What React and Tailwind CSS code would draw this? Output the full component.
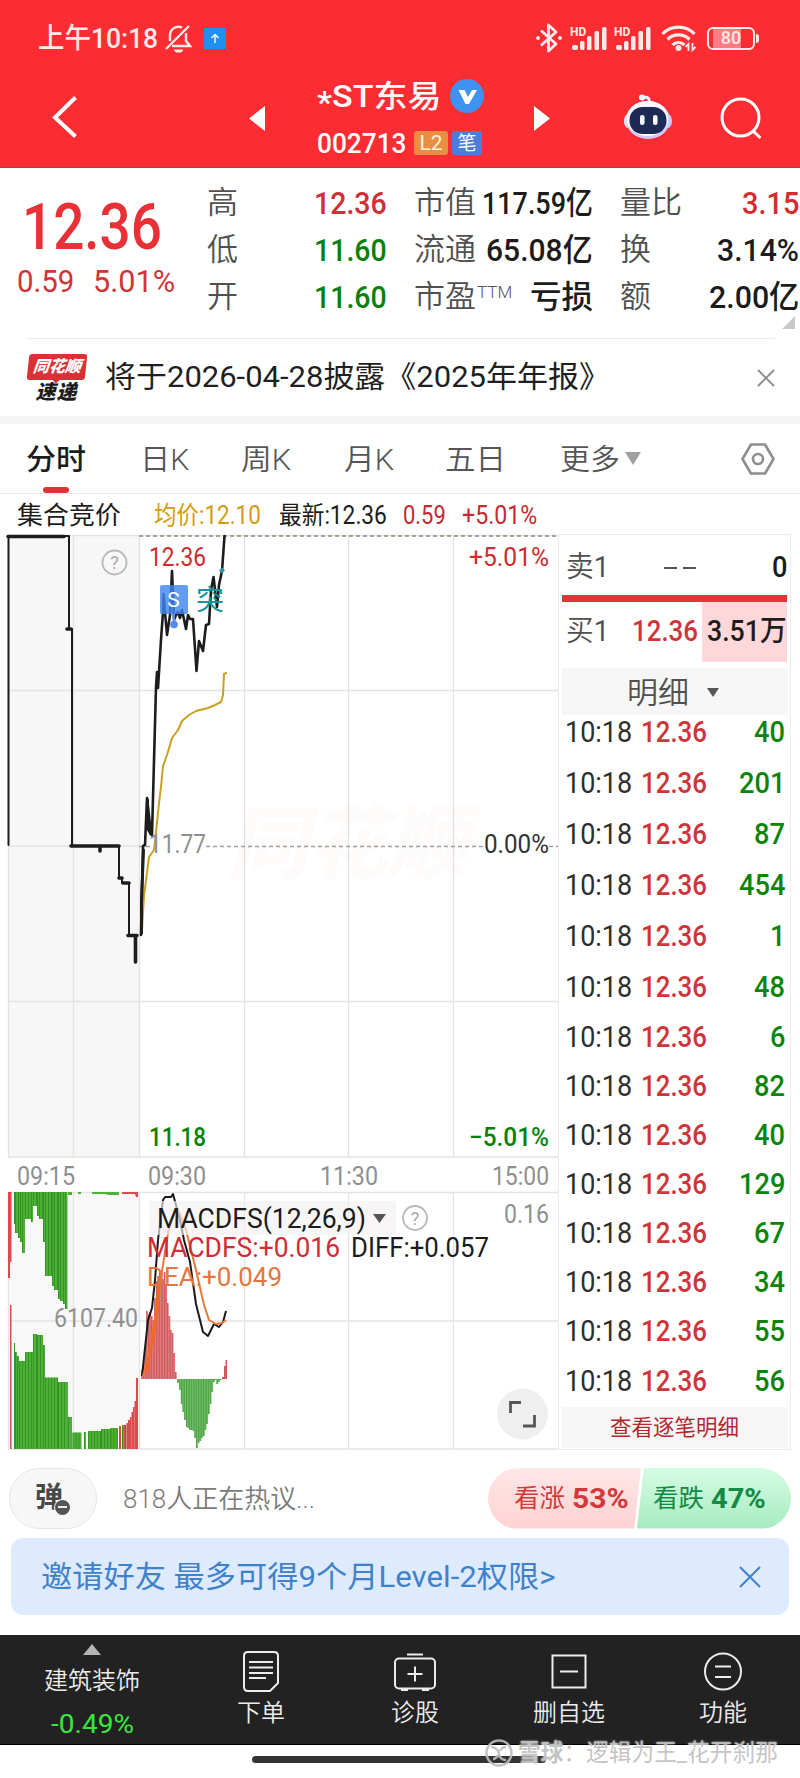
import { useLayoutEffect, useRef, useState } from "react";
import clsx from "clsx";

const STATS = [
  [
    { label: "高", value: "12.36", tone: "text-[#d02f35]", width: "w-[73px]" },
    { label: "市值", value: "117.59亿", tone: "text-[#1c1c1c]", width: "w-[111px]" },
    { label: "量比", value: "3.15", tone: "text-[#d62b31]", width: "w-[57px]" },
  ],
  [
    { label: "低", value: "11.60", tone: "text-[#078207]", width: "w-[73px]" },
    { label: "流通", value: "65.08亿", tone: "text-[#1c1c1c]", width: "w-[107px]" },
    { label: "换", value: "3.14%", tone: "text-[#1c1c1c]", width: "w-[82px]" },
  ],
  [
    { label: "开", value: "11.60", tone: "text-[#078207]", width: "w-[73px]" },
    { label: "市盈", value: "亏损", tone: "text-[#1c1c1c]", width: "w-[63px]", sup: "TTM" },
    { label: "额", value: "2.00亿", tone: "text-[#1c1c1c]", width: "w-[90px]" },
  ],
];

const TRADES = [40, 201, 87, 454, 1, 48, 6, 82, 40, 129, 67, 34, 55, 56];

const QTY_WIDTHS = { 1: "w-[15px]", 2: "w-[31px]", 3: "w-[46px]" };

// [x, y] points, in page pixels
const PRICE = [
  [141, 935], [143, 846], [145, 845], [147, 798], [151, 834], [152, 835], [156, 687], [157, 672],
  [158, 688], [161, 640], [163, 612], [163.5, 594], [165, 612], [167, 635], [170, 615], [172, 571],
  [174, 620], [176, 615], [178, 612], [180, 618], [182, 610], [186, 629], [188, 615], [190, 619],
  [193, 619], [196.5, 671], [199, 641], [203, 651], [206, 625], [209, 624], [211, 590], [213.5, 577],
  [217, 607], [219, 585], [222, 571], [224.5, 536],
];

const AVERAGE = [
  [142, 930], [144, 896], [149, 857], [154, 850], [156, 832], [159, 803], [161, 787], [163, 766],
  [167, 755], [170, 745], [172, 738], [178, 730], [182, 721], [189, 715], [196, 711], [208, 708],
  [215, 705], [221, 702], [223, 695], [224, 674], [226, 673],
];

const DIFF = [
  [142, 1376], [148, 1320], [152, 1308], [155, 1280], [158, 1240], [163, 1200], [165, 1197],
  [171, 1197], [173, 1194], [176, 1205], [180, 1220], [184, 1240], [190, 1262], [196, 1304],
  [203, 1332], [208, 1336], [211, 1330], [214, 1324], [219, 1327], [223, 1322], [226, 1311],
];

const DEA = [
  [143, 1376], [148, 1360], [154, 1325], [160, 1285], [166, 1245], [170, 1222], [176, 1210],
  [180, 1214], [186, 1230], [196, 1270], [204, 1305], [209, 1320], [216, 1324], [222, 1323],
  [226, 1320],
];

// Auction bars: [from x, to x, y]
const UNMATCHED = [
  [14, 15, 1224], [15, 18, 1233], [18, 20, 1238], [20, 22, 1242], [22, 25, 1253], [25, 31, 1219],
  [31, 33, 1222], [33, 37, 1206], [37, 39, 1216], [39, 43, 1219], [43, 45, 1242], [45, 52, 1276],
  [52, 54, 1286], [54, 58, 1290], [58, 60, 1299], [60, 63, 1301], [63, 65, 1304], [65, 67.5, 1309],
];

const MATCHED = [
  [14, 15, 1343], [15, 17, 1352], [17, 19, 1356], [19, 25, 1361], [25, 33, 1352], [33, 37, 1334],
  [37, 43, 1335], [43, 45, 1345], [45, 58, 1377.5], [58, 67.5, 1382], [68, 71.5, 1417],
  [72.5, 81.5, 1432.5], [84, 86, 1432], [88, 101, 1431], [101, 110.5, 1429], [110.5, 118, 1428],
  [122, 126.5, 1425],
];

const MATCHED_RED = [
  [10, 11.5, 1305], [119, 121, 1426], [124, 125, 1425], [126.5, 128, 1423], [128, 130, 1420],
  [130, 131.5, 1417], [131.5, 133, 1412], [133, 134.5, 1407], [134.5, 136, 1401], [136, 138, 1378],
];

const MACD_RED = [
  1370, 1362, 1348, 1311, 1314, 1312, 1316, 1320, 1298, 1281, 1276, 1270, 1274, 1279, 1272, 1284, 1303, 1316,
  1330, 1333, 1353, 1372,
];

const MACD_GREEN = [
  1383, 1390, 1404, 1412, 1420, 1427, 1428, 1430, 1430, 1431, 1438, 1448, 1443, 1441, 1438, 1436,
  1430, 1424, 1414, 1404, 1392, 1382, 1380, 1384, 1382, 1380,
];

const toPoints = (list) => list.map((p) => p.join(",")).join(" ");

// Squeezes a text into the width its class gives, the way the app's narrow digits look
const Fit = ({ className, children }) => {
  const outer = useRef(null);
  const inner = useRef(null);
  const [scale, setScale] = useState(1);

  useLayoutEffect(() => {
    setScale(outer.current.clientWidth / inner.current.offsetWidth);
  }, [children]);

  return (
    <span ref={outer} className={clsx("block shrink-0 leading-none whitespace-nowrap", className)}>
      <span
        ref={inner}
        className="inline-block origin-left align-top"
        style={{ transform: `scaleX(${scale})` }}
      >
        {children}
      </span>
    </span>
  );
};

const Signal = () => (
  <div className="relative h-[25px] w-[38px]">
    <span className="absolute left-0 top-0 text-[12px] font-bold leading-none">HD</span>
    <svg className="absolute inset-0" width="38" height="25" viewBox="0 0 38 25" fill="currentColor">
      <rect x="2" y="19" width="6" height="5" rx="2" />
      <rect x="10" y="15" width="4.5" height="9" rx="1.5" />
      <rect x="17" y="10" width="4.5" height="14" rx="1.5" />
      <rect x="24.5" y="5" width="4.5" height="19" rx="1.5" />
      <rect x="32" y="1" width="4.5" height="23" rx="1.5" />
    </svg>
  </div>
);

const StatusBar = () => (
  <div className="flex h-[76px] items-center pl-[38px] pr-[41px] text-[#ffe9e9]">
    <Fit className="mt-[1px] w-[120px] text-[28px] font-medium">上午10:18</Fit>
    <svg className="ml-[7px]" width="27" height="29" viewBox="0 0 27 29" fill="none" stroke="currentColor" strokeWidth="2.4">
      <path d="M5 17V11a8.500 8.500 0 0 1 12-7.500M21 9v8l4 5H7M1 25 24 2" />
      <path d="M9 26h9l-2 2h-5z" fill="currentColor" strokeWidth="1" />
    </svg>
    <svg className="ml-3" width="22" height="21" viewBox="0 0 22 21" fill="none">
      <rect width="22" height="21" fill="#1f8ff0" />
      <path d="M11 15V7M7.500 10 11 6.500 14.500 10" stroke="#fff" strokeWidth="1.400" />
    </svg>
    <div className="ml-auto flex items-center">
      <svg width="28" height="30" viewBox="0 0 28 30" fill="none" stroke="currentColor" strokeWidth="2.800">
        <path d="M6 7.500 21 21l-7.500 7V2L21 9 6 22.500" strokeLinejoin="round" />
        <circle cx="3" cy="15" r="1.500" fill="currentColor" strokeWidth="1" />
        <circle cx="25" cy="15" r="1.500" fill="currentColor" strokeWidth="1" />
      </svg>
      <div className="ml-[7px] flex gap-[6px]">
        <Signal />
        <Signal />
      </div>
      <svg className="ml-[9px]" width="36" height="27" viewBox="0 0 36 27" fill="none" stroke="currentColor" strokeWidth="3.200">
        <path d="M1.500 9a22 22 0 0 1 32 0M6.500 14.500a15.500 15.500 0 0 1 22 0M11.500 20a8.500 8.500 0 0 1 12 0" />
        <circle cx="17.500" cy="23" r="3" fill="currentColor" stroke="none" />
        <path d="M27.500 26v-7l-3 3M31.500 18v7l3-3" strokeWidth="1.800" />
      </svg>
      <div className="ml-[10px] flex items-center">
        <div className="flex h-[23px] w-[48px] items-center justify-center rounded-md border-2 border-current bg-[linear-gradient(90deg,transparent_8%,#ff7d80_8%,#ff7d80_72%,transparent_72%)] text-[18px] font-medium leading-none">
          80
        </div>
        <span className="ml-px h-[9px] w-[3px] rounded-r bg-current" />
      </div>
    </div>
  </div>
);

const Robot = () => (
  <svg width="50" height="46" viewBox="0 0 50 46" fill="none">
    <path d="M19 4c6-2 8 0 7 6" stroke="#f6eaff" strokeWidth="3" />
    <circle cx="19" cy="3.500" r="3" fill="#fff" />
    <ellipse cx="5" cy="27" rx="4" ry="7" fill="#ece8ff" />
    <ellipse cx="45" cy="27" rx="4" ry="7" fill="#c9c5fa" />
    <ellipse cx="25" cy="26" rx="22" ry="19" fill="#cfcbff" />
    <ellipse cx="24.500" cy="24.500" rx="21" ry="17.500" fill="#fbf8ff" />
    <rect x="6.500" y="13" width="37" height="27" rx="13" fill="#1c2a55" />
    <rect x="17" y="21" width="4.500" height="10" rx="2.200" fill="#fff" />
    <rect x="30" y="21" width="4.500" height="10" rx="2.200" fill="#fff" />
  </svg>
);

const Header = () => (
  <div className="flex h-[90px] items-start pl-[51px] text-white">
    <svg className="mt-5 shrink-0" width="27" height="43" viewBox="0 0 27 43" fill="none" stroke="currentColor" strokeWidth="4">
      <path d="M24.500 1.500 4 21.500l20.500 19" />
    </svg>
    <svg className="ml-[170px] mt-[30px] shrink-0" width="17" height="25" viewBox="0 0 17 25" fill="currentColor">
      <path d="M17 0v25L1 12.500z" />
    </svg>
    <div className="ml-[52px] w-[170px] shrink-0">
      <div className="flex h-[40px] items-center">
        <Fit className="w-[124px] text-[31px] font-medium">
          <span className="inline-block translate-y-[6px]">*</span>ST东易
        </Fit>
        <svg className="ml-[9px]" width="34" height="34" viewBox="0 0 34 34">
          <circle cx="17" cy="17" r="17" fill="#3f92f0" />
          <path d="M8.500 11h6l3.500 7 4-7h5l-8 14h-3.500z" fill="#fff" />
        </svg>
      </div>
      <div className="mt-[15px] flex h-6 items-center">
        <Fit className="mt-[2px] w-[89px] text-[28px] font-medium">002713</Fit>
        <span className="ml-[8px] flex h-6 w-[34px] items-center justify-center rounded-[3px] bg-[#e88f43] text-[21px] leading-none text-[#fff2d8]">
          L2
        </span>
        <span className="ml-1 flex h-6 w-[30px] items-center justify-center rounded-[3px] bg-[#4d7ddb] text-[19px] leading-none">
          笔
        </span>
      </div>
    </div>
    <svg className="ml-[47px] mt-[30px] shrink-0" width="17" height="25" viewBox="0 0 17 25" fill="currentColor">
      <path d="M0 0v25l16-12.500z" />
    </svg>
    <div className="ml-[72px] mt-[18px] shrink-0">
      <Robot />
    </div>
    <svg className="ml-[47px] mt-[21px] shrink-0" width="43" height="43" viewBox="0 0 43 43" fill="none" stroke="currentColor" strokeWidth="3">
      <circle cx="20.500" cy="20.500" r="18.500" />
      <path d="m33 34 7.500 7" />
    </svg>
  </div>
);

const COLUMN_WIDTHS = ["w-[180px]", "w-[179px]", "w-[179px]"];

const Quote = () => (
  <section className="relative flex h-[170px]">
    <div className="w-[207px] shrink-0">
      <Fit className="ml-[22px] mt-[27px] w-[140px] text-[65px] font-medium text-[#e83136]">12.36</Fit>
      <div className="mt-[6px] flex gap-[19px] pl-[17px] text-[31px] text-[#cf3439]">
        <Fit className="w-[57px]">0.59</Fit>
        <Fit className="w-[82px]">5.01%</Fit>
      </div>
    </div>
    <div className="mt-[11px] flex flex-col">
      {STATS.map((row) => (
        <div key={row[0].label} className="flex h-[47px] items-center gap-[27px]">
          {row.map((cell, i) => (
            <div key={cell.label} className={clsx("flex items-center", COLUMN_WIDTHS[i])}>
              <span className="text-[31px] font-[350] leading-none text-[#505050]">{cell.label}</span>
              {cell.sup && (
                <Fit className="-mt-2 ml-[1px] w-[35px] text-[17px] font-[350] text-[#555]">{cell.sup}</Fit>
              )}
              <Fit className={clsx("ml-auto text-[32px] font-medium", cell.width, cell.tone)}>
                {cell.value}
              </Fit>
            </div>
          ))}
        </div>
      ))}
    </div>
    <svg className="absolute bottom-[9px] right-[5px]" width="13" height="13" viewBox="0 0 13 13">
      <path d="M13 0v13H0z" fill="#c9c9c9" />
    </svg>
  </section>
);

const Notice = () => (
  <section className="ml-[26px] mr-[25px] flex h-[78px] items-center border-t border-[#ececec]">
    <div className="flex w-[61px] flex-col items-center italic">
      <div className="relative flex h-[26px] w-[58px] -skew-x-6 items-center justify-center rounded-[3px] bg-[#dc3037] text-[16px] font-black leading-none text-white">
        同花顺
        <span className="absolute -bottom-[2px] size-[7px] rotate-45 bg-[#dc3037]" />
      </div>
      <span className="mt-[2px] text-[20px] font-black leading-none tracking-[1px] text-[#1c1c1c]">速递</span>
    </div>
    <Fit className="-mt-[2px] ml-[18px] w-[505px] text-[30px] text-[#1f1f1f]">将于2026-04-28披露《2025年年报》</Fit>
    <svg className="ml-auto" width="18" height="18" viewBox="0 0 18 18" stroke="#8a8a8a" strokeWidth="1.800">
      <path d="m1 1 16 16M17 1 1 17" />
    </svg>
  </section>
);

const Tabs = () => (
  <nav className="flex h-[70px] items-center border-b border-[#ececec] pl-[26px] text-[29px] font-[350] text-[#555]">
    <div className="relative flex h-full items-center font-medium text-[#1c1c1c]">
      <Fit className="mt-[3px] w-[60px]">分时</Fit>
      <span className="absolute bottom-0 left-[17px] h-[6px] w-[26px] rounded-full bg-[#e23336]" />
    </div>
    <Fit className="ml-[54px] mt-[3px] w-[49px]">日K</Fit>
    <Fit className="ml-[52px] mt-[3px] w-[50px]">周K</Fit>
    <Fit className="ml-[53px] mt-[3px] w-[50px]">月K</Fit>
    <Fit className="ml-[51px] mt-[3px] w-[61px]">五日</Fit>
    <Fit className="ml-[54px] mt-[3px] w-[60px]">更多</Fit>
    <svg className="ml-[5px]" width="16" height="13" viewBox="0 0 16 13">
      <path d="M0 0h16L8 13z" fill="#a0a0a0" />
    </svg>
    <svg className="ml-[100px]" width="34" height="32" viewBox="0 0 34 32" fill="none" stroke="#8e8e8e" strokeWidth="2.600">
      <path d="M10 1.500h14L32.500 16 24 30.500H10L1.500 16z" strokeLinejoin="round" />
      <circle cx="17" cy="16" r="5" />
    </svg>
  </nav>
);

const Legend = () => (
  <div className="flex h-[41px] items-center pl-[17px] pt-[2px] text-[25px] text-[#1c1c1c]">
    <Fit className="w-[104px]">集合竞价</Fit>
    <Fit className="ml-[33px] w-[107px] text-[#d59b13]">均价:12.10</Fit>
    <Fit className="ml-[18px] w-[108px]">最新:12.36</Fit>
    <Fit className="ml-[16px] w-[43px] text-[#c8282e]">0.59</Fit>
    <Fit className="ml-[16px] w-[75px] text-[#c8282e]">+5.01%</Fit>
  </div>
);

const Label = ({ x, y, w, size = 26, children, ...rest }) => (
  <text x={x} y={y} fontSize={size} textLength={w} lengthAdjust="spacingAndGlyphs" {...rest}>
    {children}
  </text>
);

const Help = ({ x, y }) => (
  <g>
    <circle cx={x} cy={y} r="12" fill="none" stroke="#b8b8b8" strokeWidth="1.800" />
    <text x={x} y={y + 6.5} fontSize="18" textAnchor="middle" fill="#a8a8a8">
      ?
    </text>
  </g>
);

const Chart = () => (
  <svg className="shrink-0" width="558" height="916" viewBox="0 534 558 916">
    <rect x="8" y="535" width="131" height="622" fill="#f7f7f7" />
    <rect x="8" y="1192" width="131" height="257" fill="#f8f8f8" />
    <g stroke="#e3e3e3" strokeWidth="1.300">
      <path d="M8 535.500H558M8 690.500H558M8 1001.500H558M8 1157H558M8 1192.500H558M8 1321H558M8 1449H558" />
      <path d="M8.500 535V1157M73.500 535V1157M139.500 535V1157M244.500 535V1157M348.500 535V1157M453.500 535V1157" />
      <path d="M8.500 1192V1449M73.500 1192V1449M139.500 1192V1449M244.500 1192V1449M348.500 1192V1449M453.500 1192V1449" />
      <path d="M8 846H139" />
    </g>
    <path d="M139 536H558" stroke="#918c70" strokeWidth="1.400" strokeDasharray="4 3" />
    <path d="M206 846.500H484" stroke="#a0a0a0" strokeWidth="1.400" strokeDasharray="4 3" />
    <path d="M139 846.500H150M549 846.500H558" stroke="#a0a0a0" strokeWidth="1.400" strokeDasharray="4 3" />
    <text x="228" y="872" fontSize="80" fontWeight="900" fontStyle="italic" fill="#e00" opacity="0.012">
      同花顺
    </text>

    <g fill="none" stroke="#1d1d1d" strokeLinejoin="round" strokeLinecap="round">
      <path d="M8.500 845V536H69V629H72V846H119V878H122V883H129V935H135.500V962" strokeWidth="2" />
      <path d="M8 536.500H64M67 629H71M71 846H119M119 878H122M123 883H129M128 935.500H137M135.500 936V962M100 846V851" strokeWidth="3.600" />
      <polyline points={toPoints(AVERAGE)} stroke="#c9a01f" strokeWidth="2" />
      <polyline points={toPoints(PRICE)} strokeWidth="2.600" />
      <path d="M141.500 933V900L143.500 850M147.500 800V828L151 834M157.500 674V686" strokeWidth="3" />
    </g>
    <Label x="149" y="853" w="57" fill="#8f8f8f">11.77</Label>
    <path d="M222 567.500l3 3-3 3-3-3z" fill="#2596a8" />
    <rect x="160" y="585" width="28" height="29" rx="2" fill="#3f87ee" opacity="0.82" />
    <path d="M174 614v8" stroke="#4f90ee" strokeWidth="2" />
    <circle cx="174" cy="624.500" r="3.800" fill="#4f90ee" />
    <text x="173.500" y="607" fontSize="21" textAnchor="middle" fill="#fff">
      S
    </text>
    <text x="196" y="610" fontSize="28" fill="#17939e">
      突
    </text>
    <Help x={114.5} y={562.5} />
    <Label x="149" y="566" w="57" fill="#cf2a30">12.36</Label>
    <Label x="469" y="566" w="80" fill="#cf2a30">+5.01%</Label>
    <Label x="484" y="853" w="65" fill="#333">0.00%</Label>
    <g fill="#078207" fontWeight="500">
      <Label x="149" y="1146" w="57">11.18</Label>
      <Label x="469" y="1146" w="80">−5.01%</Label>
    </g>
    <g fill="#8f8f8f">
      <Label x="17" y="1185" w="58" size={26}>09:15</Label>
      <Label x="148" y="1185" w="58" size={26}>09:30</Label>
      <Label x="320" y="1185" w="58" size={26}>11:30</Label>
      <Label x="492" y="1185" w="57" size={26}>15:00</Label>
      <Label x="504" y="1223" w="45" size={26}>0.16</Label>
    </g>

    <g fill="#4bb236">
      {UNMATCHED.map(([x1, x2, y]) => (
        <rect key={x1} x={x1} y="1192" width={x2 - x1} height={y - 1192} />
      ))}
      {MATCHED.map(([x1, x2, y]) => (
        <rect key={x1} x={x1} y={y} width={x2 - x1} height={1449 - y} />
      ))}
      <path d="M68 1192h4v3h-4zM78 1192h3v2h-3zM92 1192h27v3h-10l-4-1h-13z" />
    </g>
    <g fill="#e0484e">
      {MATCHED_RED.map(([x1, x2, y]) => (
        <rect key={x1} x={x1} y={y} width={x2 - x1} height={1449 - y} />
      ))}
      <rect x="8" y="1192" width="2" height="86" />
      <rect x="10" y="1192" width="1.500" height="70" />
      <path d="M122 1192h16v5h-2l-1-3h-13z" />
    </g>
    <g stroke="#277f1c" strokeWidth="0.600">
      {UNMATCHED.flatMap(([x1, x2, y]) =>
        [x1, x1 + 3, x1 + 6]
          .filter((x) => x < x2)
          .map((x) => <path key={`${x}-${y}`} d={`M${x + 0.5} 1192V${y}`} />)
      )}
      {MATCHED.flatMap(([x1, x2, y]) =>
        [x1, x1 + 3, x1 + 6, x1 + 9, x1 + 12]
          .filter((x) => x < x2)
          .map((x) => <path key={`${x}-${y}`} d={`M${x + 0.5} ${y}V1449`} />)
      )}
    </g>
    <Label x="54" y="1327" w="84" size={26} fill="#909090">6107.40</Label>

    {MACD_RED.map((y, i) => (
      <g key={i}>
        <rect x={141.5 + i * 1.6} y={y} width="1.600" height={1379 - y} fill="#ea7377" />
        <rect x={141.5 + i * 1.6} y={y} width="0.600" height={1379 - y} fill="#b94b50" />
      </g>
    ))}
    {MACD_GREEN.map((y, i) => (
      <g key={i}>
        <rect x={177.5 + i * 1.7} y="1379" width="1.700" height={y - 1379} fill="#68bf5e" />
        <rect x={177.5 + i * 1.7} y="1379" width="0.600" height={y - 1379} fill="#3d8d37" />
      </g>
    ))}
    <path d="M222 1379v-2h2v-11h1.500v-6h1.500v19z" fill="#d9575c" />
    <g fill="none" strokeWidth="2" strokeLinejoin="round">
      <polyline points={toPoints(DIFF)} stroke="#1a1a1a" />
      <polyline points={toPoints(DEA)} stroke="#e9793c" />
      <path d="M146 1372l9-46 4-35M157 1306l3-30" stroke="#f26a22" strokeWidth="3" />
    </g>
    <rect x="149" y="1201" width="247" height="34" fill="#f4eff1" opacity="0.65" />
    <Label x="157" y="1228" w="209" size={27} fill="#1c1c1c">MACDFS(12,26,9)</Label>
    <path d="M373 1214h13l-6.500 9z" fill="#555" />
    <Help x={415} y={1218} />
    <Label x="147" y="1256.500" w="193" size={27} fill="#d02c33">MACDFS:+0.016</Label>
    <Label x="351" y="1256.500" w="138" size={27} fill="#1c1c1c">DIFF:+0.057</Label>
    <Label x="147" y="1285.500" w="135" size={26} fill="#e4763f">DEA:+0.049</Label>
    <circle cx="522.500" cy="1414" r="25.500" fill="#efefef" />
    <path d="M521 1402.500H510.500V1413M523 1426H534.500V1415" fill="none" stroke="#555" strokeWidth="2.800" />
  </svg>
);

const OrderBook = () => (
  <aside className="flex h-[916px] w-[233px] flex-col border border-[#ededed] px-[3px] text-[29px] text-[#505050]">
    <div className="flex h-[60px] items-center pl-[4px] pt-[6px]">
      <Fit className="w-[43px]">
        <span className="font-[350]">卖</span>1
      </Fit>
      <span className="ml-[55px] h-[2px] w-[13px] bg-[#555]" />
      <span className="ml-[6px] h-[2px] w-[13px] bg-[#555]" />
      <Fit className="ml-auto w-[15px] font-medium text-[#1c1c1c]">0</Fit>
    </div>
    <div className="mt-[1px] h-[7px] bg-[#e63337]" />
    <div className="flex h-[60px] items-center pl-[4px]">
      <Fit className="w-[43px]">
        <span className="font-[350]">买</span>1
      </Fit>
      <Fit className="ml-[23px] w-[66px] font-medium text-[#cf3439]">12.36</Fit>
      <div className="ml-auto flex h-full w-[85px] items-center justify-end bg-[#fdd7d9]">
        <Fit className="w-[80px] font-medium text-[#1c1c1c]">3.51万</Fit>
      </div>
    </div>
    <div className="mt-[6px] flex h-[47px] shrink-0 items-center bg-[#f6f6f6] pl-[65px] pt-[3px]">
      <Fit className="w-[62px] text-[30px] font-[350]">明细</Fit>
      <svg className="ml-[18px]" width="12" height="9" viewBox="0 0 12 9">
        <path d="M0 0h12L6 9z" fill="#555" />
      </svg>
    </div>
    <div className="-mt-2 flex flex-col">
      {TRADES.map((qty, i) => (
        <div
          key={i}
          className={clsx("flex items-center pl-[3px] pr-[2px]", i < 6 || i === 13 ? "h-[51px]" : "h-[49px]")}
        >
          <Fit className="w-[67px] font-normal text-[#2e2e2e]">10:18</Fit>
          <Fit className="ml-[9px] w-[66px] font-medium text-[#cf3439]">12.36</Fit>
          <Fit className={clsx("ml-auto font-medium text-[#0a850a]", QTY_WIDTHS[String(qty).length])}>{qty}</Fit>
        </div>
      ))}
    </div>
    <div className="mt-auto mb-[1px] flex h-[42px] items-center justify-center bg-[#f6f6f6] text-[21.500px] leading-none text-[#b3282e]">
      查看逐笔明细
    </div>
  </aside>
);

const Sentiment = () => (
  <section className="flex h-[88px] items-center pb-[1px] pl-[9px] pr-[9px] pt-[9px]">
    <div className="relative flex h-[61px] w-[88px] items-center rounded-full border border-[#e6e6e6] bg-[#f7f7f7] pl-[25px] text-[28px] font-bold leading-none text-[#484848]">
      弹
      <span className="absolute left-[45px] top-[31px] flex size-[15px] items-center justify-center rounded-full bg-[#555] ring-1 ring-[#f7f7f7]">
        <span className="h-[2px] w-[9px] bg-[#eee]" />
      </span>
    </div>
    <Fit className="ml-[26px] mt-[2px] w-[192px] text-[26px] font-[350] text-[#7c7c7c]">818人正在热议...</Fit>
    <div className="ml-auto flex h-[61px] w-[303px] text-[25px]">
      <div className="flex w-[153px] items-center rounded-l-full bg-linear-to-b from-[#ffe6e7] to-[#ffd3d1] pl-[26px] text-[#d13a3a] [clip-path:polygon(0_0,100%_0,95.5%_100%,0_100%)]">
        <Fit className="mt-[1px] w-[51px]">看涨</Fit>
        <Fit className="ml-[7px] mt-[2px] w-[57px] text-[28px] font-bold">53%</Fit>
      </div>
      <div className="-ml-[4px] flex w-[154px] items-center rounded-r-full bg-linear-to-b from-[#d5fce4] to-[#a5ecc0] pl-[16px] text-[#138a45] [clip-path:polygon(4.500%_0,100%_0,100%_100%,0_100%)]">
        <Fit className="mt-[1px] w-[51px]">看跌</Fit>
        <Fit className="ml-[7px] mt-[2px] w-[55px] text-[28px] font-bold">47%</Fit>
      </div>
    </div>
  </section>
);

const Banner = () => (
  <section className="mx-[11px] flex h-[77px] items-center rounded-xl bg-[#deeafd] pl-[30px] pr-[28px] text-[#3f82cc]">
    <Fit className="mt-[1px] w-[515px] text-[30px]">邀请好友 最多可得9个月Level-2权限&gt;</Fit>
    <svg className="ml-auto" width="22" height="22" viewBox="0 0 22 22" stroke="currentColor" strokeWidth="2">
      <path d="m1 1 20 20M21 1 1 21" />
    </svg>
  </section>
);

const NAV = [
  {
    label: "下单",
    icon: (
      <>
        <path d="M6 1h26q4 0 4 4v27l-8 8H6q-4 0-4-4V5q0-4 4-4z" />
        <path d="M7 11h24M7 16.500h24M7 22h24M7 27h17" />
      </>
    ),
  },
  {
    label: "诊股",
    icon: (
      <>
        <rect x="-1" y="7.500" width="40" height="30" rx="4" />
        <path d="M11 3.500h16M19 15.500v15M11.500 23h15M5 39h7M26 39h7" />
      </>
    ),
  },
  {
    label: "删自选",
    icon: (
      <>
        <rect x="2.500" y="4.500" width="33" height="32" />
        <path d="M10 20.500h18" />
      </>
    ),
  },
  {
    label: "功能",
    icon: (
      <>
        <circle cx="19" cy="20.500" r="18" />
        <path d="M11 15.500h16M11 26h16" />
      </>
    ),
  },
];

const BottomBar = () => (
  <nav className="mt-5 flex h-[110px] border-b border-black bg-[#222] text-[24px] font-[350] leading-none text-[#ececec]">
    <div className="flex w-[184px] flex-col items-center pt-[9px]">
      <svg width="18" height="11" viewBox="0 0 18 11">
        <path d="M9 0l9 11H0z" fill="#b5b5b5" />
      </svg>
      <span className="mt-[14px]">建筑装饰</span>
      <Fit className="mt-[18px] w-[83px] text-[26px] font-normal text-[#38e83c]">-0.49%</Fit>
    </div>
    {NAV.map((item) => (
      <div key={item.label} className="flex w-[154px] flex-col items-center pt-4">
        <svg
          className="overflow-visible"
          width="38"
          height="41"
          viewBox="0 0 38 41"
          fill="none"
          stroke="currentColor"
          strokeWidth="2"
        >
          {item.icon}
        </svg>
        <span className="mt-[9px]">{item.label}</span>
      </div>
    ))}
  </nav>
);

export default function App() {
  return (
    <main className="relative h-[1778px] w-[800px] overflow-hidden bg-white font-['Roboto','Noto_Sans_CJK_SC',sans-serif]">
      <header className="h-[168px] border-b border-[#c8353a] bg-[#fb2d33]">
        <StatusBar />
        <Header />
      </header>
      <Quote />
      <Notice />
      <div className="h-2 bg-[#f5f5f5]" />
      <Tabs />
      <Legend />
      <div className="-mt-[1px] flex">
        <Chart />
        <OrderBook />
      </div>
      <Sentiment />
      <Banner />
      <BottomBar />
      <div className="ml-[252px] mt-[11px] h-[7px] w-[294px] rounded-full bg-[#333]" />
      <div className="absolute bottom-[11px] left-[485px] flex items-center text-[24px] leading-none text-[#bdbdbd]/90 [text-shadow:0_0_2px_#fff]">
        <svg width="28" height="28" viewBox="0 0 28 28" fill="none" stroke="currentColor" strokeWidth="2.500">
          <circle cx="14" cy="14" r="12.500" />
          <path d="M6 8c5 0 8 4 8 7s3 6 7 6M21 8c-3 0-5 2-6 4M8 20c3 0 4-2 5-4" />
        </svg>
        <Fit className="ml-[5px] w-[260px]">
          <b>雪球</b>：逻辑为王_花开刹那
        </Fit>
      </div>
    </main>
  );
}
